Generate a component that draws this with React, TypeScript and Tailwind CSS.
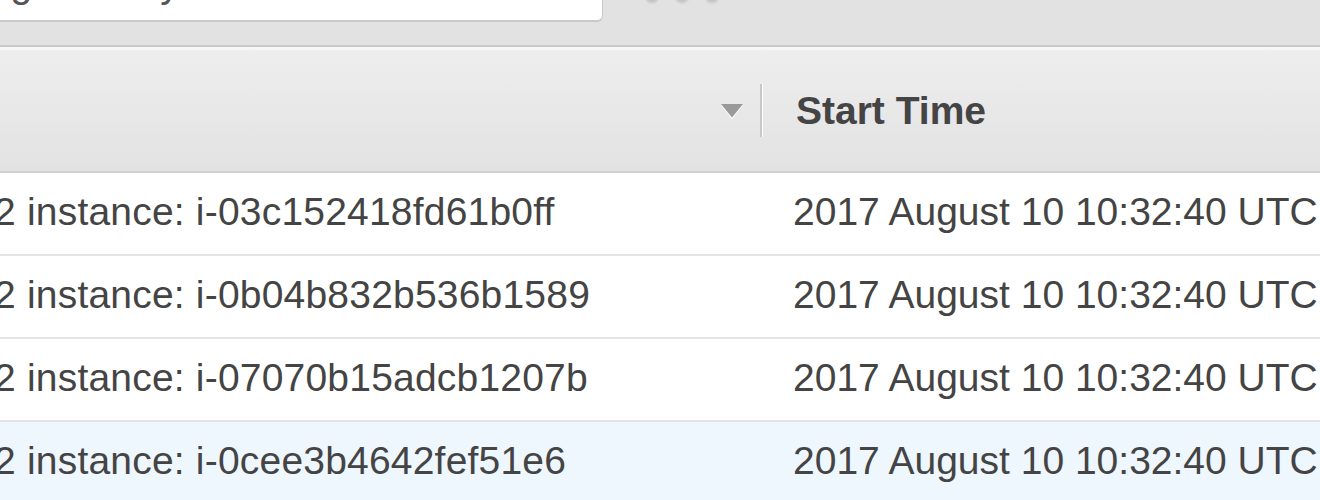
const rows = [
  { id: 'i-03c152418fd61b0ff', selected: false },
  { id: 'i-0b04b832b536b1589', selected: false },
  { id: 'i-07070b15adcb1207b', selected: false },
  { id: 'i-0cee3b4642fef51e6', selected: true },
]

function SortCaret() {
  return (
    <svg width="22" height="15" viewBox="0 0 22 15" className="shrink-0">
      <path d="M0 1 L22 1 L11 15 Z" fill="#ffffff" />
      <path d="M0 0 L22 0 L11 13.5 Z" fill="#9a9a9a" />
    </svg>
  )
}

export default function App() {
  return (
    <div className="w-[1320px] h-[500px] overflow-hidden bg-white font-['Liberation_Sans',Arial,sans-serif] text-[#444444]">
      {/* toolbar with the filter box */}
      <div className="h-[47px] bg-[#e2e2e2] border-b-2 border-[#cacaca] flex items-start">
        <div className="w-[603px] h-[22px] bg-white border-r border-b-2 border-[#c9c9c9] rounded-br-[6px] overflow-hidden">
          <div className="-mt-[39px] -ml-[22px] text-[39px] leading-[45px] text-[#555555] whitespace-nowrap">tag and keyword</div>
        </div>
        <div className="flex gap-[16px] ml-[42px] -mt-[11px]">
          <span className="w-[14px] h-[14px] rounded-full bg-[#c4c4c4] blur-[1px]" />
          <span className="w-[14px] h-[14px] rounded-full bg-[#c4c4c4] blur-[1px]" />
          <span className="w-[14px] h-[14px] rounded-full bg-[#c4c4c4] blur-[1px]" />
        </div>
      </div>
      <div className="h-[3px] bg-[#f6f6f6]" />

      {/* column header */}
      <div className="h-[123px] flex items-center bg-linear-to-b from-[#eeeeee] to-[#e2e2e2] border-b-2 border-[#d0d0d0]">
        <div className="w-[760px] shrink-0 flex justify-end pr-[17px] pt-[1px]">
          <SortCaret />
        </div>
        <div className="w-[3px] h-[53px] flex shrink-0">
          <span className="w-[2px] bg-[#c8c8c8]" />
          <span className="w-[1px] bg-white" />
        </div>
        <div className="pl-[33px] pt-[2px] text-[39px] font-bold text-[#444444] whitespace-nowrap">Start Time</div>
      </div>

      {/* rows */}
      {rows.map(r => (
        <div key={r.id}
          className={`h-[83px] flex items-center border-b-2 border-[#e4e4e4] text-[39px] whitespace-nowrap ${r.selected ? 'bg-[#eef6fe]' : 'bg-white'}`}>
          <div className="w-[763px] shrink-0 -ml-[6px] pb-[2px] overflow-hidden tracking-[0.2px]">2 instance: {r.id}</div>
          <div className="pl-[36px] pb-[2px]">2017 August 10 10:32:40 UTC</div>
        </div>
      ))}
    </div>
  )
}
